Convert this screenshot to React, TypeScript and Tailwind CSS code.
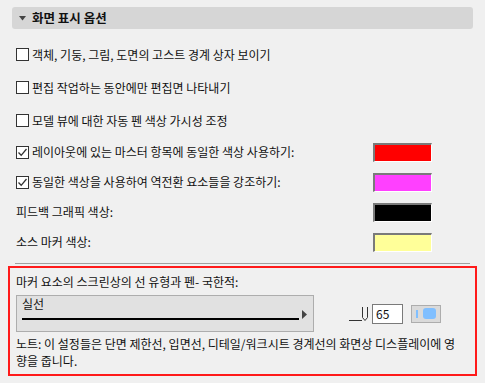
import React from 'react';

const font = { fontFamily: '"Noto Sans CJK KR", "Noto Sans", sans-serif' };

const Box: React.FC<{ checked?: boolean }> = ({ checked }) => (
  <span className="w-[13px] h-[13px] border border-[#333] bg-white flex items-center justify-center shrink-0">
    {checked && (
      <svg width="11" height="11" viewBox="0 0 11 11">
        <path d="M1.5 5.5 L4.2 8.3 L9.5 2" fill="none" stroke="#333" strokeWidth="1.3" />
      </svg>
    )}
  </span>
);

const Swatch: React.FC<{ color: string }> = ({ color }) => (
  <div className="w-[59px] h-[19px] border-t-2 border-l-2 border-t-[#7a7a7a] border-l-[#7a7a7a] border-b border-r border-b-white border-r-white" style={{ backgroundColor: color }} />
);

const App: React.FC = () => {
  const rows = [
    { label: '객체, 기둥, 그림, 도면의 고스트 경계 상자 보이기', box: false },
    { label: '편집 작업하는 동안에만 편집면 나타내기', box: false },
    { label: '모델 뷰에 대한 자동 펜 색상 가시성 조정', box: false },
  ];
  const colors = [
    { label: '레이아웃에 있는 마스터 항목에 동일한 색상 사용하기:', box: true, color: '#ff0000' },
    { label: '동일한 색상을 사용하여 역전환 요소들을 강조하기:', box: true, color: '#ff40ff' },
    { label: '피드백 그래픽 색상:', box: null, color: '#000000' },
    { label: '소스 마커 색상:', box: null, color: '#ffff99' },
  ];

  return (
    <div className="w-[485px] h-[383px] bg-[#f0f0f0] text-[12px] text-[#111] pt-[7px] overflow-hidden" style={font}>
      <div className="mx-[12px] h-[22px] rounded-[3px] bg-[#d6d6d6] flex items-center pl-[7px] gap-[6px]">
        <svg width="7" height="5" viewBox="0 0 7 5"><path d="M0 0 H7 L3.5 4.5 Z" fill="#444" /></svg>
        <span className="font-bold text-[12.5px]">화면 표시 옵션</span>
      </div>

      <div className="pl-[16px] pt-[9px] flex flex-col">
        {rows.map((r) => (
          <div key={r.label} className="h-[33px] flex items-center gap-[3px] leading-none">
            <Box />
            <span>{r.label}</span>
          </div>
        ))}
      </div>

      <div className="pl-[16px] pr-[53px] flex flex-col">
        {colors.map((r) => (
          <div key={r.label} className="h-[30px] flex items-center justify-between">
            <div className="flex items-center gap-[3px]">
              {r.box !== null && <Box checked />}
              <span>{r.label}</span>
            </div>
            <Swatch color={r.color} />
          </div>
        ))}
      </div>

      <div className="mx-[15px] mt-[6px] border-t border-[#a0a0a0]" />

      <div className="mx-[8px] mt-[2px] h-[110px] border-2 border-[#ff1a1a] px-[6px] pt-[5px]">
        <div className="leading-[18px]">마커 요소의 스크린상의 선 유형과 펜- 국한적:</div>
        <div className="mt-[4px] flex items-center">
          <div className="w-[298px] h-[37px] bg-[#e1e1e1] border border-[#adadad] flex flex-col px-[5px]">
            <span className="leading-[15px]">실선</span>
            <div className="flex items-center mt-[7px]">
              <div className="flex-1 h-[2px] bg-black" />
              <svg width="6" height="9" viewBox="0 0 6 9" className="ml-[3px] -mt-[10px]"><path d="M0 0 L5 4.5 L0 9 Z" fill="#444" /></svg>
            </div>
          </div>
          <div className="ml-[34px] flex items-center">
            <svg width="20" height="20" viewBox="0 0 20 20">
              <path d="M1 16.5 H14" stroke="#333" strokeWidth="1" fill="none" />
              <path d="M14.5 3 V13.5 L17 16.5 L19.5 13.5 V3" stroke="#333" strokeWidth="1" fill="none" />
            </svg>
            <div className="ml-[4px] w-[31px] h-[20px] bg-white border border-[#7a7a7a] flex items-center pl-[3px]">65</div>
            <div className="ml-[8px] w-[30px] h-[18px] bg-[#dadada] border border-[#adadad] flex items-center pl-[4px] gap-[5px]">
              <div className="w-[2px] h-[8px] bg-[#80bfff]" />
              <div className="w-[13px] h-[11px] rounded-[3px] bg-[#80bfff]" />
            </div>
          </div>
        </div>
        <div className="mt-[3px] leading-[17px] pr-[12px]">
          노트: 이 설정들은 단면 제한선, 입면선, 디테일/워크시트 경계선의 화면상 디스플레이에 영향을 줍니다.
        </div>
      </div>
    </div>
  );
};

export default App;
